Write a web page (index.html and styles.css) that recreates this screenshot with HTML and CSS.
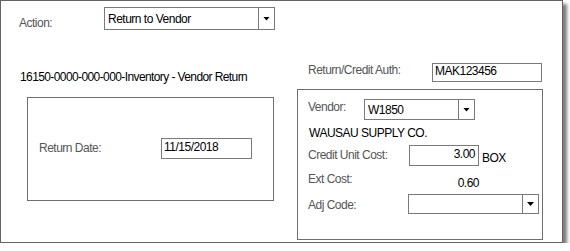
FILE: index.html
```html
<!DOCTYPE html>
<html lang="en">
<head>
  <meta charset="UTF-8">
  <title>Vendor Return</title>
  <link rel="stylesheet" href="styles.css">
</head>
<body>
  <div class="window">
    <div class="action-row">
      <span class="label action-label">Action:</span>
      <div class="combo combo-action">
        <span class="combo-text">Return to Vendor</span>
        <span class="combo-btn"><span class="arrow"></span></span>
      </div>
    </div>

    <div class="panes">
      <div class="pane-left">
        <div class="account">16150-0000-000-000-Inventory - Vendor Return</div>
        <div class="group group-date">
          <div class="row date-row">
            <span class="label date-label">Return Date:</span>
            <div class="textbox date-box">11/15/2018</div>
          </div>
        </div>
      </div>

      <div class="pane-right">
        <div class="row auth-row">
          <span class="label auth-label">Return/Credit Auth:</span>
          <div class="textbox auth-box">MAK123456</div>
        </div>

        <div class="group group-vendor">
          <div class="row vendor-row">
            <span class="label vendor-label">Vendor:</span>
            <div class="combo combo-vendor">
              <span class="combo-text">W1850</span>
              <span class="combo-btn"><span class="arrow"></span></span>
            </div>
          </div>
          <div class="company">WAUSAU SUPPLY CO.</div>
          <div class="row cost-row">
            <span class="label cost-label">Credit Unit Cost:</span>
            <div class="textbox cost-box">3.00</div>
            <span class="unit">BOX</span>
          </div>
          <div class="row ext-row">
            <span class="label cost-label">Ext Cost:</span>
            <span class="ext-value">0.60</span>
          </div>
          <div class="row adj-row">
            <span class="label adj-label">Adj Code:</span>
            <div class="combo combo-adj">
              <span class="combo-text"></span>
              <span class="combo-btn"><span class="arrow"></span></span>
            </div>
          </div>
        </div>
      </div>
    </div>
  </div>
</body>
</html>
```

FILE: styles.css
```css
body {
  font-family: "Liberation Sans", Arial, sans-serif;
  font-size: 12px;
  line-height: 14px;
  letter-spacing: -0.5px;
  color: #000;
  background: #fff;
  margin: 0;
}

.window {
  box-sizing: border-box;
  width: 563px;
  height: 243px;
  border: 1px solid #646464;
  box-shadow: 4px 4px 3px rgba(0, 0, 0, 0.5);
}

.label {
  color: #555;
  flex: none;
}

.row {
  display: flex;
  align-items: flex-start;
}

/* action */
.action-row {
  display: flex;
  align-items: flex-start;
  margin-top: 6px;
  padding-left: 18px;
}
.action-label {
  width: 85px;
  padding-top: 9px;
}

/* inputs */
.combo {
  box-sizing: border-box;
  display: flex;
  border: 1px solid #7a7a7a;
  background: #fff;
}
.combo-text {
  flex: 1;
  display: flex;
  align-items: center;
  padding-left: 3px;
  white-space: nowrap;
}
.combo-btn {
  width: 15px;
  border-left: 1px solid #7a7a7a;
  display: flex;
  align-items: center;
  justify-content: center;
}
.arrow {
  width: 7px;
  height: 4px;
  background: #000;
  clip-path: polygon(0 0, 100% 0, 50% 100%);
}
.combo-action {
  width: 171px;
  height: 23px;
}
.combo-vendor {
  width: 111px;
  height: 21px;
}
.combo-adj {
  width: 131px;
  height: 20px;
}

.textbox {
  box-sizing: border-box;
  border: 1px solid #7a7a7a;
  padding: 1px 2px;
  background: #fff;
  white-space: nowrap;
}

/* panes */
.panes {
  display: grid;
  grid-template-columns: 296px 1fr;
}

.pane-left {
  padding-top: 40px;
  padding-left: 19px;
}
.account {
  white-space: nowrap;
  letter-spacing: -0.6px;
}

.group {
  box-sizing: border-box;
  border: 1px solid #6e6e6e;
}
.group-date {
  width: 247px;
  height: 104px;
  margin-top: 13px;
  margin-left: 7px;
}
.date-row {
  margin-top: 40px;
  padding-left: 11px;
}
.date-label {
  width: 122px;
  margin-top: 3px;
}
.date-box {
  width: 91px;
  height: 21px;
}

.pane-right {
  padding-top: 33px;
}
.auth-row {
  padding-left: 11px;
}
.auth-label {
  width: 124px;
}
.auth-box {
  width: 110px;
  height: 19px;
  padding-top: 0;
}

.group-vendor {
  width: 246px;
  height: 151px;
  margin-top: 7px;
}
.group-vendor .row {
  padding-left: 10px;
}
.vendor-row {
  margin-top: 9px;
}
.vendor-label {
  width: 56px;
  margin-top: 1px;
}
.company {
  margin-top: 6px;
  padding-left: 11px;
  white-space: nowrap;
}
.cost-row {
  margin-top: 5px;
}
.cost-label {
  width: 101px;
  margin-top: 3px;
}
.cost-box {
  width: 70px;
  height: 21px;
  padding-right: 3px;
  text-align: right;
}
.unit {
  margin-left: 3px;
  margin-top: 6px;
}
.ext-row {
  margin-top: 6px;
}
.ext-row .cost-label {
  margin-top: 0;
}
.ext-value {
  width: 70px;
  margin-top: 4px;
  text-align: right;
}
.adj-row {
  margin-top: 4px;
}
.adj-label {
  width: 100px;
  margin-top: 4px;
}
```
